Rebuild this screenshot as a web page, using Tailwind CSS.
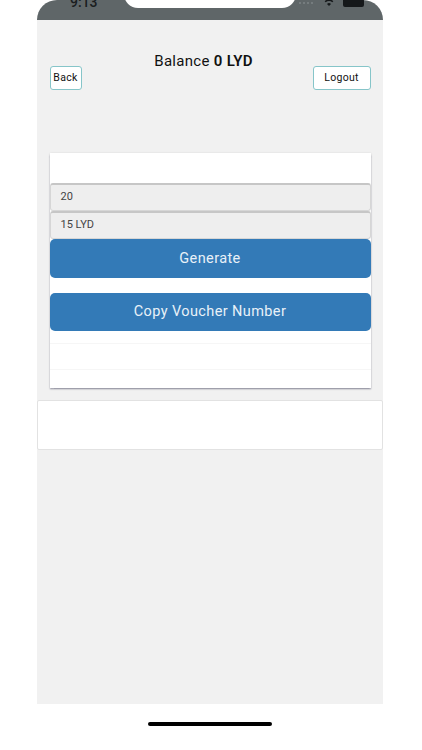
<!DOCTYPE html>
<html lang="en">
<head>
    <meta charset="UTF-8">
    <meta name="viewport" content="width=device-width, initial-scale=1.0">
    <title>Voucher</title>
    <script src="https://cdn.jsdelivr.net/npm/@tailwindcss/browser@4"></script>
</head>
<body class="bg-white font-['Roboto','Noto_Sans',sans-serif] text-[#111]">
    <div class="w-[422px] h-[750px] overflow-hidden pl-[37px] pr-[39px] flex flex-col">
        <!-- status bar, cut off by the top of the shot -->
        <div class="h-[20px] shrink-0 bg-[#5f6668] rounded-t-[22px] relative overflow-hidden flex justify-between items-end pb-[11px] text-[#1a1d1e]">
            <span class="ml-[33px] text-[14px] leading-[13px] font-medium">9:13</span>
            <div class="absolute left-[87px] top-[-20px] w-[172px] h-[28px] bg-white rounded-b-[14px]"></div>
            <div class="flex items-center gap-[7px] mr-[19px] translate-y-[1px]">
                <div class="flex gap-[2px] mr-[2px]">
                    <span class="w-[2px] h-[2px] rounded-full bg-[#7d8486]"></span>
                    <span class="w-[2px] h-[2px] rounded-full bg-[#7d8486]"></span>
                    <span class="w-[2px] h-[2px] rounded-full bg-[#7d8486]"></span>
                    <span class="w-[2px] h-[2px] rounded-full bg-[#7d8486]"></span>
                </div>
                <svg width="14" height="12" viewBox="0 0 14 12" class="mb-[3px]">
                    <path d="M1 4.5a8.5 8.5 0 0 1 12 0M3.2 6.8a5.3 5.3 0 0 1 7.6 0" fill="none" stroke="#15181a" stroke-width="1.5"/>
                    <path d="M5 9a2.8 2.8 0 0 1 4 0l-2 2z" fill="#15181a"/>
                </svg>
                <div class="w-[21px] h-[12px] bg-[#15181a] rounded-[2px] mb-[3px]"></div>
            </div>
        </div>

        <div class="flex-1 bg-[#f1f1f1] mb-[46px] flex flex-col">
            <!-- header -->
            <div class="flex justify-between items-start px-[12.5px] h-[133px] shrink-0">
                <button class="mt-[46px] w-[32px] h-[24px] bg-white border border-[#86c5c9] rounded-[3px] text-[10.5px] tracking-[0.3px] leading-none">Back</button>
                <div class="mt-[32px] ml-[13px] text-[15px] tracking-[0.3px] leading-[18px] whitespace-nowrap">Balance <b class="font-semibold">0 LYD</b></div>
                <button class="mt-[46px] w-[58px] h-[24px] bg-white border border-[#86c5c9] rounded-[3px] text-[10.5px] tracking-[0.3px] leading-none">Logout</button>
            </div>

            <!-- voucher card -->
            <div class="mx-[12.5px] h-[235px] bg-white shadow-[0_1.5px_1.5px_0_rgba(110,110,130,0.6),0_0_2px_0_rgba(0,0,0,0.1)] flex flex-col shrink-0">
                <div class="h-[30px] shrink-0"></div>
                <div class="h-[28px] shrink-0 bg-[#eeeeee] border border-[#d6d6d6] border-t-2 border-t-[#c6c6c6] rounded-[3px] pl-[10px] pb-[1px] flex items-center text-[11px] text-[#444]">20</div>
                <div class="h-[28px] shrink-0 bg-[#eeeeee] border border-[#d6d6d6] border-t-2 border-t-[#c6c6c6] rounded-[3px] pl-[10px] pb-[1px] flex items-center text-[11px] text-[#444]">15 LYD</div>
                <button class="h-[39px] shrink-0 bg-[#337ab7] rounded-[5px] text-[#e8f1f8] text-[14.5px] tracking-[0.4px]">Generate</button>
                <div class="h-[15px] shrink-0"></div>
                <button class="h-[38px] shrink-0 bg-[#337ab7] rounded-[5px] text-[#e8f1f8] text-[14.5px] tracking-[0.4px]">Copy Voucher Number</button>
                <div class="h-[13px] shrink-0 border-b border-[#f6f6f6]"></div>
                <div class="h-[26px] shrink-0 border-b border-[#f6f6f6]"></div>
            </div>

            <!-- empty panel -->
            <div class="mt-[12px] h-[50px] shrink-0 bg-white border border-[#e2e2e2] rounded-[2px]"></div>
        </div>

        <!-- home indicator -->
        <div class="absolute left-[148px] top-[722px] w-[124px] h-[4px] rounded-full bg-black"></div>
    </div>
</body>
</html>
